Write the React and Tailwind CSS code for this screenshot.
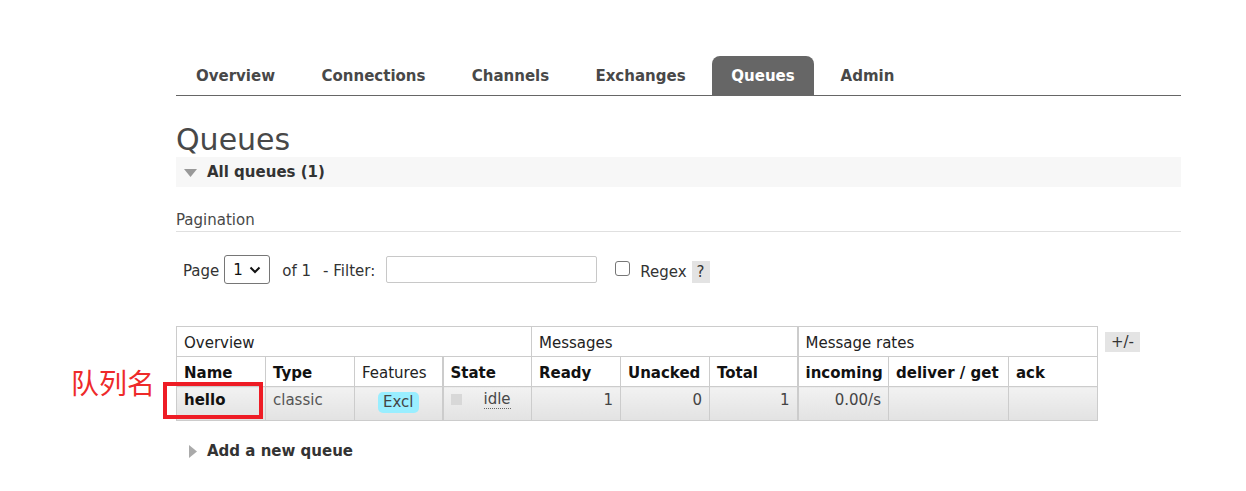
import React from "react";

const tabs = [
  ["Overview", "w-[119px]"],
  ["Connections", "w-[143px]"],
  ["Channels", "w-[117px]"],
  ["Exchanges", "w-[129px]"],
  ["Queues", "w-[102px]"],
  ["Admin", "w-[93px]"],
];

export default function App() {
  const th2 = "border border-[#ccc] h-[30px] pt-[3px] px-[7px] text-left font-bold text-[#111]";
  const thn = "border border-[#ccc] h-[30px] pt-[3px] px-[7px] text-left font-normal text-[#222]";
  const td = "border border-[#ccc] h-[33px] pb-[6px] px-[7px] bg-gradient-to-b from-[#f2f2f2] to-[#e2e2e2]";
  return (
    <div className="relative w-[1246px] h-[491px] bg-white font-['DejaVu_Sans',Verdana,sans-serif] text-[15px] text-[#484848]">
      <div className="pl-[176px] pr-[65px] pt-[56px]">
        {/* tabs */}
        <div className="flex gap-[7px] border-b border-[#666]">
          {tabs.map(([t, w]) => (
            <div
              key={t}
              className={
                t === "Queues"
                  ? w + " h-[39px] pt-[2px] flex items-center justify-center font-bold bg-[#666] text-white rounded-t-[8px] whitespace-nowrap"
                  : w + " h-[39px] pt-[2px] flex items-center justify-center font-bold text-[#484848] whitespace-nowrap"
              }
            >
              {t}
            </div>
          ))}
        </div>

        <h1 className="mt-[29px] h-[30px] text-[30px] leading-[30px] font-normal text-[#484848]">Queues</h1>

        <div className="mt-[2px] h-[30px] bg-[#f7f7f7] flex items-center pt-[1px]">
          <svg width="13" height="8" viewBox="0 0 13 8" className="ml-[8px]">
            <polygon points="0,0 13,0 6.5,8" fill="#999" />
          </svg>
          <span className="ml-[10px] font-bold text-[#333]">All queues (1)</span>
        </div>

        <div className="mt-[23px] pb-[1px] border-b border-[#e0e0e0] leading-[20px]">Pagination</div>

        <div className="mt-[23px] flex items-center h-[29px] text-[#333]">
          <span className="ml-[7px] mt-[3px]">Page</span>
          <div className="ml-[5px] w-[46px] h-[29px] border border-[#767676] rounded-[3px] flex items-center justify-between px-[8px] text-[#111]">
            <span className="mt-[2px]">1</span>
            <svg width="12" height="8" viewBox="0 0 12 8">
              <path d="M1.5 1.5 L6 6 L10.5 1.5" stroke="#111" strokeWidth="2" fill="none" />
            </svg>
          </div>
          <span className="ml-[12px] mt-[3px]">of 1</span>
          <span className="ml-[12px] mt-[3px]">- Filter:</span>
          <div className="ml-[11px] w-[211px] h-[27px] border border-[#c8c8c8] rounded-[2px] bg-white"></div>
          <div className="ml-[18px] w-[15px] h-[15px] border border-[#767676] rounded-[3px] mb-[3px]"></div>
          <span className="ml-[10px] mt-[5px]">Regex</span>
          <span className="ml-[5px] mt-[5px] w-[18px] h-[22px] bg-[#e3e3e3] flex items-center justify-center">?</span>
        </div>

        <div className="mt-[42px] flex items-start gap-[7px]">
          <table className="table-fixed w-[921px] border-collapse border border-[#ccc] text-[15px]">
            <colgroup>
              <col className="w-[89px]" />
              <col className="w-[89px]" />
              <col className="w-[88px]" />
              <col className="w-[89px]" />
              <col className="w-[89px]" />
              <col className="w-[89px]" />
              <col className="w-[88px]" />
              <col className="w-[91px]" />
              <col className="w-[120px]" />
              <col className="w-[89px]" />
            </colgroup>
            <thead>
              <tr>
                <th colSpan={4} className={thn}>Overview</th>
                <th colSpan={3} className={thn}>Messages</th>
                <th colSpan={3} className={thn + " border-l-2"}>Message rates</th>
              </tr>
              <tr>
                <th className={th2}>Name</th>
                <th className={th2}>Type</th>
                <th className={thn}>Features</th>
                <th className={th2 + " border-l-2"}>State</th>
                <th className={th2}>Ready</th>
                <th className={th2}>Unacked</th>
                <th className={th2}>Total</th>
                <th className={th2 + " border-l-2 whitespace-nowrap"}>incoming</th>
                <th className={th2 + " whitespace-nowrap"}>deliver / get</th>
                <th className={th2}>ack</th>
              </tr>
            </thead>
            <tbody>
              <tr>
                <td className={td + " font-bold text-[#111]"}>hello</td>
                <td className={td + " text-[#555]"}>classic</td>
                <td className={td + " text-center"}>
                  <span className="inline-block px-[5px] h-[21px] leading-[21px] rounded-[5px] bg-[#99eeff] text-[#444] mt-[5px]">Excl</span>
                </td>
                <td className={td + " border-l-2"}>
                  <div className="flex items-center">
                    <span className="w-[11px] h-[11px] bg-[#d8d8d8] mt-[-2px]"></span>
                    <span className="ml-[22px] border-b border-dotted border-[#666] leading-[17px]">idle</span>
                  </div>
                </td>
                <td className={td + " text-right text-[#444]"}>1</td>
                <td className={td + " text-right text-[#444]"}>0</td>
                <td className={td + " text-right text-[#444]"}>1</td>
                <td className={td + " border-l-2 text-right text-[#444]"}>0.00/s</td>
                <td className={td}></td>
                <td className={td}></td>
              </tr>
            </tbody>
          </table>
          <div className="mt-[6px] w-[35px] h-[20px] bg-[#e4e4e4] flex items-center justify-center text-[#333]">+/-</div>
        </div>

        <div className="mt-[21px] flex items-center h-[20px]">
          <svg width="8" height="13" viewBox="0 0 8 13" className="ml-[13px]">
            <polygon points="0,0 8,6.5 0,13" fill="#aaa" />
          </svg>
          <span className="ml-[10px] font-bold text-[#333]">Add a new queue</span>
        </div>
      </div>

      {/* annotations */}
      <div className="absolute left-[71px] top-[363px] text-[28px] leading-[38px] text-[#ee2a2a] font-['Noto_Sans_CJK_SC',sans-serif]">队列名</div>
      <div className="absolute left-[163px] top-[382px] w-[100px] h-[37px] border-[4px] border-[#ee1c25]"></div>
    </div>
  );
}
